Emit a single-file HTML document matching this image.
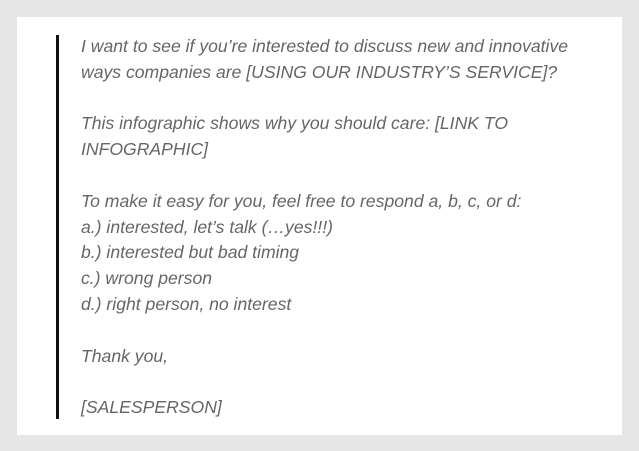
<html><head><style>
body{margin:0;width:639px;height:451px;background:#e6e6e6;overflow:hidden}
.box{position:absolute;left:17px;top:17px;width:605px;height:418px;background:#fff}
.bar{position:absolute;left:56px;top:35px;width:3px;height:384px;background:#111}
.t{position:absolute;left:81px;top:34px;font:italic 17.6px/25.8px "Liberation Sans",Arial,sans-serif;color:#666;white-space:pre}
</style></head><body>
<div class="box"></div><div class="bar"></div>
<div class="t">I want to see if you’re interested to discuss new and innovative
ways companies are [USING OUR INDUSTRY’S SERVICE]?

This infographic shows why you should care: [LINK TO
INFOGRAPHIC]

To make it easy for you, feel free to respond a, b, c, or d:
a.) interested, let’s talk (…yes!!!)
b.) interested but bad timing
c.) wrong person
d.) right person, no interest

Thank you,

[SALESPERSON]</div>
</body></html>
